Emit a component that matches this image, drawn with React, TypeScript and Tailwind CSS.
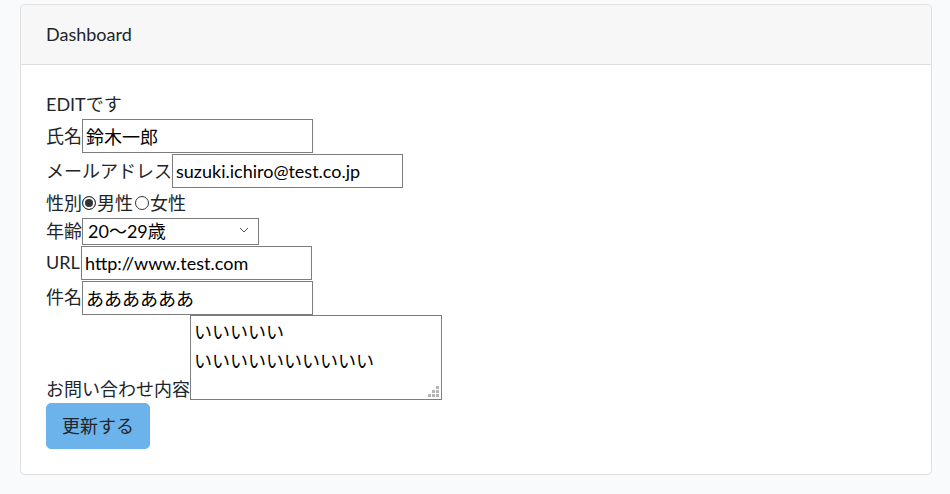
import type { FC, ReactNode } from 'react'

const font = { fontFamily: 'Lato, "Noto Sans CJK JP", sans-serif' }

const Label: FC<{ w: string; children: ReactNode }> = ({ w, children }) => (
  <span className={`${w} shrink-0 whitespace-nowrap`}>{children}</span>
)

const inputCls =
  'h-[34px] w-[231px] border border-[#7d7d7d] bg-white px-[3px] text-[18px] text-black outline-none'

export default function App() {
  return (
    <div className="min-h-[494px] bg-[#f8fafc] pt-[4px] text-[18px] leading-[28.8px] text-[#212529]" style={font}>
      <div className="ml-[20px] w-[912px] rounded-[5px] border border-[#dfdfdf] bg-white">
        {/* header */}
        <div className="rounded-t-[5px] border-b border-[#dfdfdf] bg-[#f7f7f7] px-[25px] py-[15px]">Dashboard</div>

        {/* body */}
        <div className="flex flex-col p-[25px]">
          <div>EDITです</div>

          <div className="flex h-[35px] items-center">
            <Label w="w-[36px]">氏名</Label>
            <input className={inputCls} defaultValue="鈴木一郎" />
          </div>

          <div className="flex h-[35px] items-center">
            <Label w="w-[126px]">メールアドレス</Label>
            <input className={inputCls} defaultValue="suzuki.ichiro@test.co.jp" />
          </div>

          <div className="flex h-[28.8px] items-center">
            <Label w="w-[36px]">性別</Label>
            <input
              type="radio"
              name="gender"
              defaultChecked
              className="h-[14px] w-[14px] appearance-none rounded-full border border-[#333] checked:bg-[#333] checked:shadow-[inset_0_0_0_2px_white]"
            />
            <span className="ml-px">男性</span>
            <input
              type="radio"
              name="gender"
              className="ml-[2px] h-[14px] w-[14px] appearance-none rounded-full border border-[#333] checked:bg-[#333] checked:shadow-[inset_0_0_0_2px_white]"
            />
            <span className="ml-px">女性</span>
          </div>

          <div className="flex h-[28px] items-center">
            <Label w="w-[36px]">年齢</Label>
            <div className="relative">
              <select
                defaultValue="20"
                className="h-[27px] w-[177px] appearance-none border border-[#7d7d7d] bg-white pl-[5px] text-[18px] leading-[24px] text-black outline-none"
              >
                <option value="10">10〜19歳</option>
                <option value="20">20〜29歳</option>
                <option value="30">30〜39歳</option>
              </select>
              <svg className="pointer-events-none absolute right-[10px] top-[10px]" width="10" height="6" viewBox="0 0 10 6">
                <path d="M1 1l4 4 4-4" fill="none" stroke="#555" strokeWidth="1" />
              </svg>
            </div>
          </div>

          <div className="flex h-[35px] items-center">
            <Label w="w-[35px]">URL</Label>
            <input className={inputCls} defaultValue="http://www.test.com" />
          </div>

          <div className="flex h-[35px] items-center">
            <Label w="w-[36px]">件名</Label>
            <input className={inputCls} defaultValue="ああああああ" />
          </div>

          <div className="flex h-[88px] items-end">
            <Label w="w-[144px]">お問い合わせ内容</Label>
            <div className="relative self-start">
              <textarea
                className="block h-[85px] w-[252px] resize-none border border-[#7d7d7d] bg-white px-[3px] py-[2px] text-[18px] leading-[28.8px] text-black outline-none"
                defaultValue={'いいいいい\nいいいいいいいいいい'}
              />
              <svg className="absolute bottom-[3px] right-[3px]" width="11" height="11" viewBox="0 0 11 11" fill="#b5b5b5">
                <rect x="8" y="0" width="3" height="3" />
                <rect x="4" y="4" width="3" height="3" />
                <rect x="8" y="4" width="3" height="3" />
                <rect x="0" y="8" width="3" height="3" />
                <rect x="4" y="8" width="3" height="3" />
                <rect x="8" y="8" width="3" height="3" />
              </svg>
            </div>
          </div>

          <div>
            <button className="rounded-[5px] border border-[#6cb2eb] bg-[#6cb2eb] px-[15px] py-[7.5px] text-[#212529]">
              更新する
            </button>
          </div>
        </div>
      </div>
    </div>
  )
}
